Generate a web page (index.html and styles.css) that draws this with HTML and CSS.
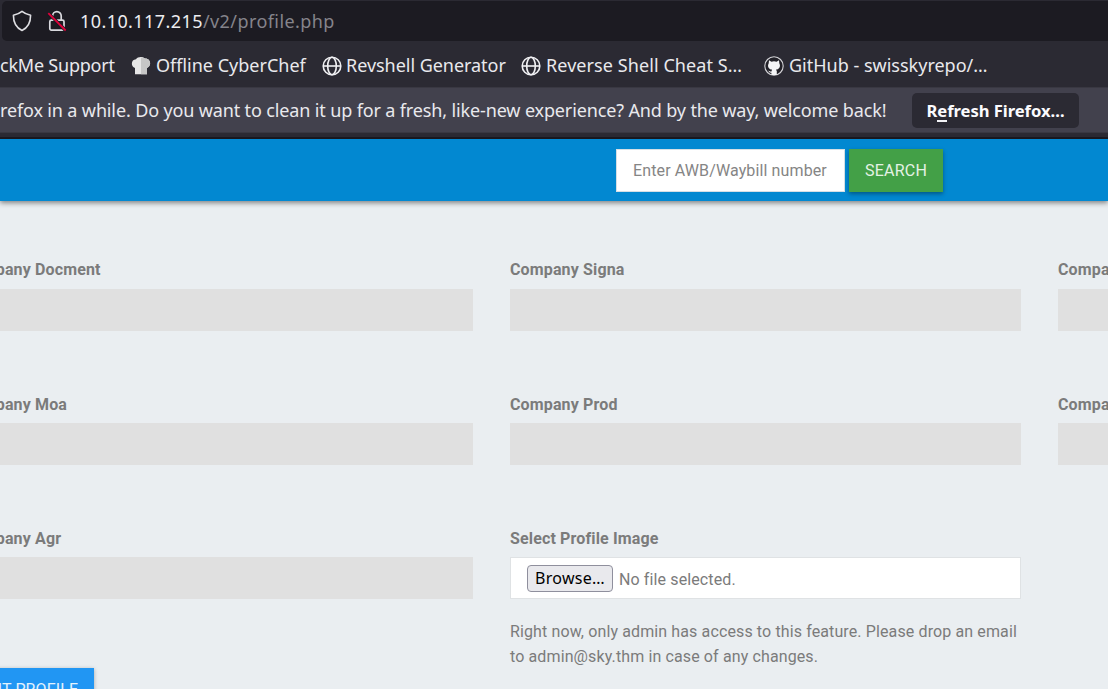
FILE: index.html
```
<!DOCTYPE html>
<html lang="en">
<head>
<meta charset="utf-8">
<title>Profile</title>
<link rel="stylesheet" href="styles.css">
</head>
<body>
<div class="browser">
  <div class="nav-row">
    <div class="urlbar">
      <svg class="shield" width="20" height="22" viewBox="0 0 20 22"><path d="M10 1.300C12.500 3.300 15.500 4.500 18.600 5.300 18.600 12.500 16.500 17.500 10 20.500 3.500 17.500 1.400 12.500 1.400 5.300 4.500 4.500 7.500 3.300 10 1.300Z" fill="none" stroke="#dedee2" stroke-width="1.600" stroke-linejoin="round"/></svg>
      <svg class="lock" width="20" height="22" viewBox="0 0 20 22"><rect x="2.800" y="10.200" width="14.200" height="9.900" rx="1.500" fill="none" stroke="#d9d9de" stroke-width="1.700"/><path d="M5.600 10V6a4.300 4.300 0 0 1 8.600 0v4" fill="none" stroke="#d9d9de" stroke-width="1.700"/><path d="M1.300 3.100 18.700 20.500" stroke="#1c1b22" stroke-width="3.400"/><path d="M1.300 3.100 18.700 20.500" stroke="#e2003b" stroke-width="1.800"/></svg>
      <span class="url"><b>10.10.117.215</b><span>/v2/profile.php</span></span>
    </div>
  </div>
  <div class="bookmarks">
    <div class="mark m1"><span>ckMe Support</span></div>
    <div class="mark m2"><svg width="20" height="20" viewBox="0 0 20 20"><path d="M4 18.300V12C-.8 10.500.2 3.300 5 3.300 6.500.4 12 .2 14 2.500c5.500-.3 7.200 7 2 9.500v6.300Z" fill="#e6e6e6"/><path d="M10 1.500v16.800h6V12c5.200-2.500 3.500-9.800-2-9.500-1-1-2.500-1.300-4-1Z" fill="#c6c6c6"/></svg><span>Offline CyberChef</span></div>
    <div class="mark m3"><svg width="20" height="20" viewBox="0 0 20 20"><g fill="none" stroke="#f0f0f3" stroke-width="1.600"><circle cx="10" cy="10" r="8.800"/><ellipse cx="10" cy="10" rx="4.300" ry="8.800"/><path d="M1.200 10h17.600"/></g></svg><span>Revshell Generator</span></div>
    <div class="mark m4"><svg width="20" height="20" viewBox="0 0 20 20"><g fill="none" stroke="#f0f0f3" stroke-width="1.600"><circle cx="10" cy="10" r="8.800"/><ellipse cx="10" cy="10" rx="4.300" ry="8.800"/><path d="M1.200 10h17.600"/></g></svg><span>Reverse Shell Cheat S…</span></div>
    <div class="mark m5"><svg width="20" height="20" viewBox="0 0 20 20"><circle cx="10" cy="10" r="9.200" fill="#222128" stroke="#d4d4d8" stroke-width="1.100"/><path d="M5 4.300 7.400 5.700Q10 5 12.600 5.700L15 4.300 15.300 7.200C17 10.500 15.300 13.200 12 13.600L12.800 15.300V19H7.400V16.800C5.200 17 5.300 15.400 4 14.800 5.800 14.300 5.700 16 7.500 15.500L8 13.600C4.700 13.200 3 10.500 4.700 7.200Z" fill="#f4f4f6"/></svg><span>GitHub - swisskyrepo/…</span></div>
  </div>
  <div class="notice">
    <span class="notice-text">refox in a while. Do you want to clean it up for a fresh, like-new experience? And by the way, welcome back!</span>
    <div class="refresh"><span>R<i>e</i>fresh Firefox…</span></div>
  </div>
</div>
<header class="topbar">
  <div class="search-input">Enter AWB/Waybill number</div>
  <div class="search-btn">SEARCH</div>
</header>
<main class="form">
  <div class="field"><label>Company Docment</label><div class="box"></div></div>
  <div class="field"><label>Company Signa</label><div class="box"></div></div>
  <div class="field"><label>Company</label><div class="box"></div></div>
  <div class="field low"><label>Company Moa</label><div class="box"></div></div>
  <div class="field low"><label>Company Prod</label><div class="box"></div></div>
  <div class="field low"><label>Company</label><div class="box"></div></div>
  <div class="field low"><label>Company Agr</label><div class="box"></div><div class="edit">EDIT PROFILE</div></div>
  <div class="field low"><label>Select Profile Image</label>
    <div class="box file"><span class="browse">Browse…</span><span class="none">No file selected.</span></div>
    <p class="hint">Right now, only admin has access to this feature. Please drop an email<br>to admin@sky.thm in case of any changes.</p>
  </div>
</main>
</body>
</html>
```
FILE: styles.css
```
* { box-sizing: border-box; }
body {
  margin: 0;
  width: 1108px;
  height: 689px;
  overflow: hidden;
  background: #eaeef1;
  font-family: Roboto, sans-serif;
  font-size: 16px;
  letter-spacing: .12px;
  color: #7b7b7b;
}
.browser {
  height: 139px;
  background: #2b2a33;
  border-bottom: 2px solid #1b1a22;
  font-family: "Noto Sans", sans-serif;
  font-size: 18px;
  letter-spacing: 0;
  color: #e9e9ed;
  white-space: nowrap;
}
.nav-row { height: 42px; padding: 1px 0 0 2px; }
.urlbar {
  display: flex;
  align-items: center;
  height: 40px;
  padding-left: 10px;
  background: #1c1b22;
  border-radius: 5px 0 0 5px;
}
.lock { margin-left: 15px; }
.url { margin-left: 13px; line-height: 40px; letter-spacing: .42px; }
.url b { font-weight: 400; color: #ededf0; }
.url span { color: #85848b; }
.bookmarks { display: flex; height: 45px; }
.mark { display: flex; align-items: center; flex: none; height: 45px; gap: 4px; }
.mark svg { position: relative; top: 1px; }
.m1 { width: 131px; letter-spacing: -.22px; }
.m2 { width: 191px; gap: 5px; }
.m3 { width: 199px; letter-spacing: -.04px; }
.m4 { width: 243px; gap: 5px; letter-spacing: .08px; }
.m5 { gap: 5px; }
.notice {
  display: flex;
  height: 46px;
  background: #42414d;
  border-top: 1px solid #393842;
  border-bottom: 1px solid #393842;
}
.notice-text { width: 912px; line-height: 45px; flex: none; letter-spacing: -.137px; }
.refresh {
  width: 167px;
  height: 35px;
  margin-top: 5px;
  border-radius: 5px;
  background: #2b2a33;
  text-align: center;
  font-weight: 700;
  font-size: 16.600px;
  letter-spacing: -.05px;
  line-height: 35px;
  color: #fbfbfe;
}
.refresh i { font-style: normal; border-bottom: 2px solid #f3f3f6; display: inline-block; line-height: 18px; }
.topbar {
  position: relative;
  display: flex;
  gap: 4px;
  height: 62px;
  padding: 10px 0 0 616px;
  background: #0288d1;
  box-shadow: 0 2px 5px rgba(0, 0, 0, .45);
}
.search-input {
  width: 229px;
  height: 43px;
  padding-left: 16px;
  border: 1px solid #d5dfe5;
  background: #fff;
  color: #858585;
  line-height: 42px;
}
.search-btn {
  width: 94px;
  height: 43px;
  background: #43a047;
  color: #e3f2e4;
  text-align: center;
  line-height: 43px;
  letter-spacing: .25px;
  box-shadow: 0 2px 4px rgba(0, 0, 0, .35);
}
.form {
  display: grid;
  grid-template-columns: repeat(3, 511px);
  grid-auto-rows: 134px;
  column-gap: 37px;
  margin-left: -38px;
  padding-top: 58px;
}
label { display: block; height: 30px; line-height: 22px; font-weight: 700; letter-spacing: .14px; }
.low label { line-height: 24px; }
.box { height: 42px; background: #e0e0e0; }
.file {
  display: flex;
  align-items: center;
  background: #fff;
  border: 1px solid #dfe2e4;
  padding-left: 16px;
}
.browse {
  width: 86px;
  height: 27px;
  margin-top: 1px;
  border: 1px solid #8f8f9d;
  border-radius: 4px;
  background: #e9e9ed;
  color: #000;
  font: 16px/25px "Noto Sans", sans-serif;
  letter-spacing: .3px;
  text-align: center;
}
.none { margin: 2px 0 0 6px; }
.hint { margin: 20px 0 0; line-height: 25px; white-space: nowrap; }
.edit {
  width: 132px;
  height: 43px;
  margin-top: 69px;
  background: #2196f3;
  color: #e3f2fd;
  text-align: center;
  line-height: 43px;
  box-shadow: 0 1px 4px rgba(0, 0, 0, .3);
}
```
